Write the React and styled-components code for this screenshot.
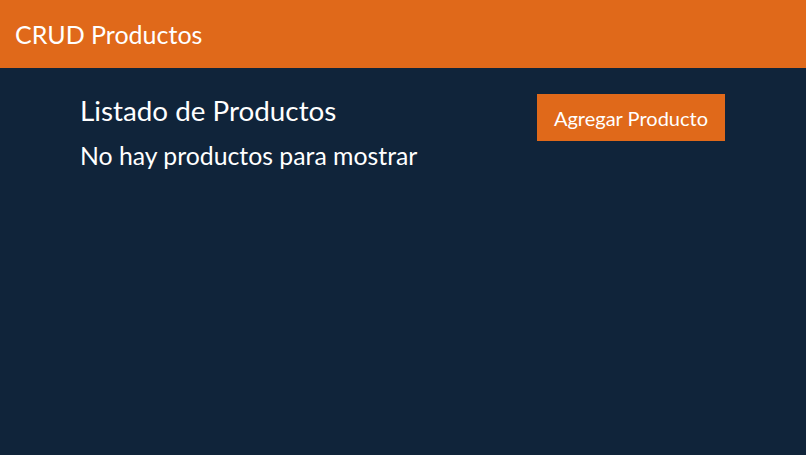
import React from "react";
import styled, { createGlobalStyle } from "styled-components";

const Global = createGlobalStyle`
  html, body { margin: 0; padding: 0; height: 100%; }
  body { background: #10243a; font-family: Lato, "Open Sans", sans-serif; }
  #root { min-height: 100vh; }
`;

const Header = styled.header`
  height: 68px;
  background: #e0691a;
  display: flex;
  align-items: center;
  padding: 0 15px;
  box-sizing: border-box;
`;

const Brand = styled.h1`
  margin: 0;
  color: #fff;
  font-size: 25px;
  font-weight: 400;
  line-height: 30px;
`;

const Main = styled.main`
  padding: 26px 81px 0 80px;
  display: flex;
  justify-content: space-between;
  align-items: flex-start;
`;

const Column = styled.div`
  display: flex;
  flex-direction: column;
`;

const Title = styled.h2`
  margin: 0;
  color: #fff;
  font-size: 27.8px;
  font-weight: 400;
  line-height: 34px;
`;

const Empty = styled.p`
  margin: 13px 0 0;
  color: #fff;
  font-size: 24.8px;
  line-height: 30px;
`;

const Button = styled.button`
  background: #e0691a;
  color: #fff;
  border: none;
  border-radius: 0;
  font-family: inherit;
  font-size: 20px;
  height: 47px;
  padding: 0 17px;
  cursor: pointer;
`;

export default function App() {
  return (
    <>
      <Global />
      <Header>
        <Brand>CRUD Productos</Brand>
      </Header>
      <Main>
        <Column>
          <Title>Listado de Productos</Title>
          <Empty>No hay productos para mostrar</Empty>
        </Column>
        <Button>Agregar Producto</Button>
      </Main>
    </>
  );
}
